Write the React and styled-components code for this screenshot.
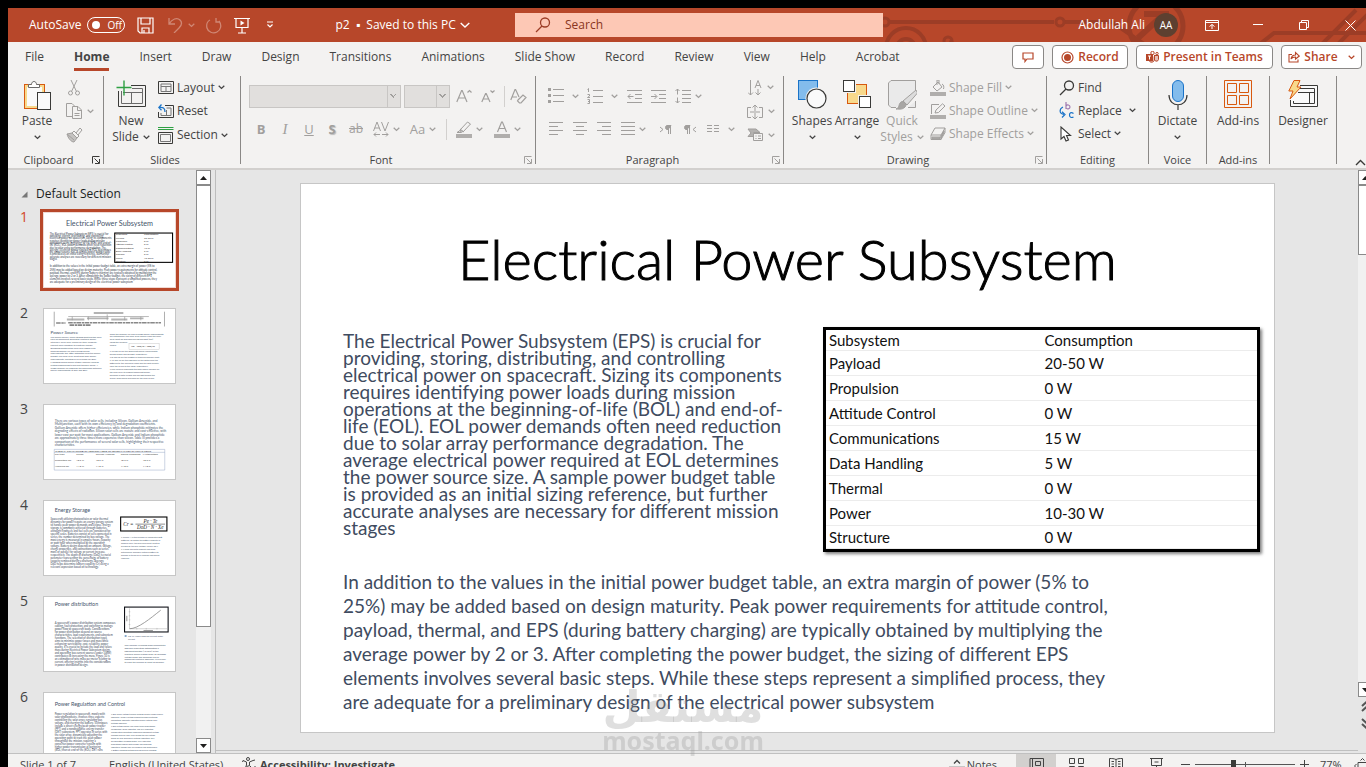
import {useState} from "react"
import styled, {createGlobalStyle} from "styled-components"

const tabs = ["File", "Home", "Insert", "Draw", "Design", "Transitions", "Animations", "Slide Show", "Record", "Review", "View", "Help", "Acrobat"]

const introLines = [
	"The Electrical Power Subsystem (EPS) is crucial for",
	"providing, storing, distributing, and controlling",
	"electrical power on spacecraft. Sizing its components",
	"requires identifying power loads during mission",
	"operations at the beginning-of-life (BOL) and end-of-",
	"life (EOL). EOL power demands often need reduction",
	"due to solar array performance degradation. The",
	"average electrical power required at EOL determines",
	"the power source size. A sample power budget table",
	"is provided as an initial sizing reference, but further",
	"accurate analyses are necessary for different mission",
	"stages",
]

const marginLines = [
	"In addition to the values in the initial power budget table, an extra margin of power (5% to",
	"25%) may be added based on design maturity. Peak power requirements for attitude control,",
	"payload, thermal, and EPS (during battery charging) are typically obtained by multiplying the",
	"average power by 2 or 3. After completing the power budget, the sizing of different EPS",
	"elements involves several basic steps. While these steps represent a simplified process, they",
	"are adequate for a preliminary design of the electrical power subsystem",
]

const budget = [
	["Payload", "20-50 W"],
	["Propulsion", "0 W"],
	["Attitude Control", "0 W"],
	["Communications", "15 W"],
	["Data Handling", "5 W"],
	["Thermal", "0 W"],
	["Power", "10-30 W"],
	["Structure", "0 W"],
]

/* ---------- icons ---------- */

const Icon = ({w = 16, h = 16, c = "currentColor", sw = 1, children}) => (
	<svg width={w} height={h} viewBox={`0 0 ${w} ${h}`} fill="none" stroke={c} strokeWidth={sw} aria-hidden="true">
		{children}
	</svg>
)

const Chevron = ({c}) => (
	<Icon w={7} h={5} c={c} sw={1.3}>
		<path d="M.7 .8 3.5 3.4 6.3 .8" />
	</Icon>
)

const SaveIcon = () => (
	<Icon w={17} h={17} sw={1.2}>
		<path d="M1 1H16V16H3L1 14ZM4 1V7H13V1M5 16V11H12V16M7 16V13" />
	</Icon>
)
const UndoIcon = () => (
	<Icon w={15} h={16} sw={1.3}>
		<path d="M1 1V7H7M1 7C4 2 9 0 12 3C15 6 13 9 11 11L6 16" />
	</Icon>
)
const RedoIcon = () => (
	<Icon w={17} h={17} sw={1.3}>
		<path d="M11 1V5H15M14 4C17 8 16 13 12 15C8 17 3 15 2 11C1 7 3 4 5 3" />
	</Icon>
)
const PresentIcon = () => (
	<Icon w={16} h={17} sw={1.2}>
		<path d="M0 1.5H16M2 1.5V10.5H14V1.5M8 10.5V16M4 16H12" />
		<path d="M6.5 3.5V8.5L10.5 6Z" fill="currentColor" stroke="none" />
	</Icon>
)
const CustomizeIcon = () => (
	<Icon w={8} h={8} sw={1.2}>
		<path d="M1 1H7M1.5 3.5 4 6 6.5 3.5" />
	</Icon>
)
const SearchIcon = ({w = 16, c}) => (
	<Icon w={w} h={16} c={c} sw={1.3}>
		<circle cx="10" cy="5.5" r="4.5" />
		<path d="M7 9 1 15" />
	</Icon>
)
const RibbonOptIcon = () => (
	<Icon w={14} h={11}>
		<path d="M.5 .5H13.5V10.5H.5ZM.5 2.5H13.5M7 9V4.5M4.5 6.5 7 4.5 9.5 6.5" />
	</Icon>
)
const MinimizeIcon = () => (
	<Icon w={10} h={10}>
		<path d="M0 4.5H10" />
	</Icon>
)
const RestoreIcon = () => (
	<Icon w={10} h={10}>
		<path d="M.5 2.5H7.5V9.5H.5ZM2.5 2.5V.5H9.5V7.5H7.5" />
	</Icon>
)
const CloseIcon = () => (
	<Icon w={11} h={11}>
		<path d="M.5 .5 10.5 10.5M10.5 .5 .5 10.5" />
	</Icon>
)
const CommentIcon = () => (
	<Icon w={12} h={11} sw={1.2}>
		<path d="M1 1H11V7H5L3 9.5V7H1Z" />
	</Icon>
)
const RecordIcon = () => (
	<Icon w={13} h={13} sw={1.2}>
		<circle cx="6.5" cy="6.5" r="5.5" />
		<circle cx="6.5" cy="6.5" r="3.5" fill="currentColor" stroke="none" />
	</Icon>
)
const TeamsIcon = () => (
	<Icon w={13} h={12}>
		<circle cx="6.5" cy="2" r="1.7" />
		<circle cx="11" cy="2.6" r="1.2" />
		<path d="M8 4.5H12.5V8.5C12 10.5 10 10.5 9 9.5M8.5 4.5V9C8 11.5 4 12 3 9.5" fill="currentColor" fillOpacity=".35" />
		<rect x="0" y="3" width="7" height="7" fill="currentColor" stroke="none" />
		<path d="M2 5H5M3.5 5V8.5" stroke="#fff" />
	</Icon>
)
const ShareIcon = () => (
	<Icon w={12} h={12} sw={1.1}>
		<path d="M4 3.5H1V11H10V8.5M3 8C3.5 5 5.5 4 7.5 4V1.5L11.3 5 7.5 8V6C5.5 6 4 6.5 3 8Z" />
	</Icon>
)
const PasteIcon = () => (
	<Icon w={28} h={31}>
		<rect x="1.5" y="4.5" width="20" height="24" fill="#f8d98c" stroke="#d8590f" />
		<rect x="4" y="7" width="15" height="19" fill="#fafafa" stroke="none" />
		<path d="M5.5 7.5V4.5H8.5C8.5 .5 13.5 .5 13.5 4.5H16.5V7.5Z" fill="#fff" stroke="#6a6a6a" />
		<rect x="14.5" y="12.5" width="13" height="17" fill="#fafafa" stroke="#3a3a38" />
	</Icon>
)
const CutIcon = () => (
	<Icon w={16} h={16}>
		<path d="M5 0 10.5 11.5M11 0 5.5 11.5" />
		<circle cx="4.5" cy="13" r="2" />
		<circle cx="11.5" cy="13" r="2" />
	</Icon>
)
const CopyIcon = () => (
	<Icon w={17} h={17}>
		<path d="M6.5 13.5H.5V.5H6L8.5 3M6.5 3.5H12L15.5 7V15.5H6.5ZM11.5 3.5V7.5H15.5M8.5 10.5H13.5M8.5 12.5H13.5" />
	</Icon>
)
const PainterIcon = () => (
	<Icon w={17} h={16}>
		<path d="M1 7 6 6 11 11 8 15C5 15 2 11 1 7Z" fill="#c4c2c0" />
		<path d="M6 6 8 4 13 9 11 11M10 6 14 1 16 3 12 8M1 7 8 13" />
	</Icon>
)
const NewSlideIcon = () => (
	<Icon w={31} h={28}>
		<path d="M15 5.5H29.5V26.5H2.5V11" stroke="#3a3a38" />
		<path d="M5.5 11V23.5H26.5V8.5H16M7 12.5H26.5M15.5 12.5V23.5" stroke="#6a6a6a" />
		<path d="M8 .5V15.5M.5 7.5H15.5" stroke="#2ea043" strokeWidth="1.4" />
	</Icon>
)
const LayoutIcon = () => (
	<Icon w={16} h={14} c="#3a3a38">
		<path d="M.5 .5H15.5V12.5H.5Z" />
		<path d="M3 3H13V10.5H3ZM3 5.5H13M8 5.5V10.5" stroke="#777" />
	</Icon>
)
const ResetIcon = () => (
	<Icon w={16} h={14} c="#3a3a38">
		<path d="M7 1.5H15.5V13.5H.5V8" />
		<path d="M8.5 4H13V11.5H3V9M8.5 6V11.5" stroke="#777" />
		<path d="M3.5 .5 .8 3.5 3.5 6.2M1 3.5C5 3 7 4 7 8" stroke="#1a73c8" strokeWidth="1.3" />
	</Icon>
)
const SectionIcon = () => (
	<Icon w={16} h={17} c="#3a3a38">
		<path d="M0 .5H15.5M0 2.5H15.5" stroke="#2ea043" />
		<path d="M.5 5.5H14.5V16.5H.5Z" />
		<path d="M2.5 7.5H12.5V14.5H2.5Z" stroke="#777" />
	</Icon>
)
const GrowFontIcon = () => (
	<Icon w={16} h={16} sw={1.2}>
		<path d="M.8 14 5.6 2.5H6.2L11 14M2.6 10H9.2M11.5 4.5 13.5 2.5 15.5 4.5" />
	</Icon>
)
const ShrinkFontIcon = () => (
	<Icon w={14} h={14} sw={1.2}>
		<path d="M.8 13 4.6 4.5H5.2L9 13M2.4 10H7.5M9.5 1.5 11.5 3.5 13.5 1.5" />
	</Icon>
)
const ClearFormatIcon = () => (
	<Icon w={17} h={16} sw={1.2}>
		<path d="M.8 12 5 1.5H5.6L9 9M2.6 9H7" />
		<path d="M8 12 13 7 16 9.5 11 15H9.5L7.5 13Z" />
	</Icon>
)
const SpacingIcon = () => (
	<Icon w={16} h={16}>
		<path d="M.5 10 4 1 7.5 10M1.7 7H6.3M8.5 1 12 10 15.5 1M3 11.5 1 13.5 3 15.5M1 13.5H7M13 11.5 15 13.5 13 15.5M15 13.5H9" />
	</Icon>
)
const HighlightIcon = () => (
	<Icon w={16} h={17}>
		<path d="M4 9 11.5 1 14.5 3 7 11ZM4 8 8 11M1 11.5 4 9.5 5.5 11.5Z" />
		<rect x="0" y="13" width="16" height="4" fill="#b0aeac" stroke="none" />
	</Icon>
)
const FontColorIcon = () => (
	<Icon w={16} h={17} sw={1.2}>
		<path d="M3.5 11 7.6 1H8.4L12.5 11M5 7.5H11" />
		<rect x="0" y="13" width="16" height="4" fill="#b0aeac" stroke="none" />
	</Icon>
)
const BulletsIcon = () => (
	<Icon w={16} h={16}>
		<path d="M5 1.5H16M5 7.5H16M5 13.5H16" />
		<path d="M0 1.5H3M0 7.5H3M0 13.5H3" strokeWidth="3" />
	</Icon>
)
const NumbersIcon = () => (
	<Icon w={16} h={17}>
		<path d="M6 2.5H16M6 8.5H16M6 14.5H16M.5 1.5 1.5 .5V4M.5 6.5H2.5V8L.5 9.5H3M.5 11.5H2.5V15.5H.5M1 13.5H2.5" />
	</Icon>
)
const OutdentIcon = () => (
	<Icon w={15} h={15}>
		<path d="M0 1.5H15M8 5.5H15M8 9.5H15M0 13.5H15M6.5 7.5H1M3.5 5 1 7.5 3.5 10" />
	</Icon>
)
const IndentIcon = () => (
	<Icon w={15} h={15}>
		<path d="M0 1.5H15M8 5.5H15M8 9.5H15M0 13.5H15M0 7.5H5.5M3.5 5 6 7.5 3.5 10" />
	</Icon>
)
const LineSpacingIcon = () => (
	<Icon w={16} h={16}>
		<path d="M7 2.5H16M7 6.5H16M7 10.5H16M7 14.5H16M2.5 1V6.5M.5 3 2.5 1 4.5 3M2.5 9.5V15M.5 13 2.5 15 4.5 13" />
	</Icon>
)
const aligns = {
	left: "M0 .5H14M0 4.5H9M0 8.5H14M0 12.5H9",
	center: "M0 .5H14M3 4.5H11M0 8.5H14M3 12.5H11",
	right: "M0 .5H14M5 4.5H14M0 8.5H14M5 12.5H14",
	justify: "M0 .5H14M0 4.5H14M0 8.5H14M0 12.5H14",
}
const AlignIcon = ({kind}) => (
	<Icon w={14} h={14}>
		<path d={aligns[kind]} />
	</Icon>
)
const PilcrowIcon = ({flip}) => (
	<Icon w={13} h={9}>
		{flip ? (
			<>
				<path d="M6 .5H2C0 .5 0 4.5 2 4.5H3Z" fill="currentColor" />
				<path d="M3.5 .5V9M5.5 .5V9M12 2 9 4.5 12 7" />
			</>
		) : (
			<>
				<path d="M12 .5H8C6 .5 6 4.5 8 4.5H9Z" fill="currentColor" />
				<path d="M9.5 .5V9M11.5 .5V9M1 2 4 4.5 1 7" />
			</>
		)}
	</Icon>
)
const ColumnsIcon = () => (
	<Icon w={13} h={8}>
		<path d="M0 .5H5M0 3.5H5M0 6.5H5M7 .5H12M7 3.5H12M7 6.5H12" />
	</Icon>
)
const TextDirIcon = () => (
	<Icon w={15} h={16}>
		<path d="M2.5 0V15M0 12.5 2.5 15 5 12.5M7 8 10 .5 13 8M8 5.5H12M10 9V15M7.5 12.5 10 15 12.5 12.5" />
	</Icon>
)
const AlignTextIcon = () => (
	<Icon w={17} h={16}>
		<path d="M4 3.5H.5V13.5H4M12 3.5H15.5V13.5H12M8 7V1M5.5 3.5 8 1 10.5 3.5M8 9V15M5.5 12.5 8 15 10.5 12.5M3 8H13" />
	</Icon>
)
const SmartArtIcon = () => (
	<Icon w={17} h={14}>
		<path d="M1 1H9L13 4.5H6.5V8.5H1L4 5Z" fill="#b4b2b0" />
		<path d="M6.5 5.5H15.5V12.5H6.5ZM8.5 8H9.5M11 8H14M8.5 10.5H9.5M11 10.5H14" fill="#f3f2f1" />
	</Icon>
)
const ShapesIcon = () => (
	<Icon w={29} h={29}>
		<rect x=".5" y=".5" width="19" height="19" fill="#83bcec" stroke="#1a73c8" />
		<circle cx="18.5" cy="18.5" r="11" fill="#f3f2f1" stroke="none" />
		<circle cx="18.5" cy="18.5" r="9.5" fill="#fafafa" stroke="#3a3a38" strokeWidth="1.2" />
	</Icon>
)
const ArrangeIcon = () => (
	<Icon w={29} h={29}>
		<rect x="4.5" y="4.5" width="19" height="19" fill="#f8d98c" stroke="#d8590f" />
		<rect x="-1" y="-1" width="14" height="14" fill="#f3f2f1" stroke="none" />
		<rect x=".5" y=".5" width="11" height="11" fill="#fff" stroke="#3a3a38" />
		<rect x="15" y="15" width="14" height="14" fill="#f3f2f1" stroke="none" />
		<rect x="16.5" y="16.5" width="11" height="11" fill="#fff" stroke="#3a3a38" />
	</Icon>
)
const QuickStylesIcon = () => (
	<Icon w={29} h={30}>
		<path d="M8 27.5H3L.5 25V3L3 .5H27.5V10M27.5 21V27.5H20" fill="#eaeaea" stroke="#a19f9d" />
		<path d="M15 21 28 10 29.5 13 19 25Z" fill="#dcdcdc" stroke="#a19f9d" />
		<path d="M8 29C12 28 10 23 14 21.5 18 22 19 25 17 27 14 30 11 29 8 29Z" fill="#a8a6a4" stroke="#a19f9d" />
	</Icon>
)
const FillIcon = () => (
	<Icon w={16} h={16}>
		<path d="M3 7 8 2 12 7 7 11ZM7 5V0H9V4M12 4C14 5 14 7 13.5 9" />
		<rect x="0" y="12" width="16" height="4" fill="#b0aeac" stroke="none" />
	</Icon>
)
const OutlineIcon = () => (
	<Icon w={16} h={16}>
		<path d="M9 1.5H1.5V11M5 10 6 7 12.5 .8 15 3 8.5 9.5Z" />
		<rect x="0" y="12" width="16" height="4" fill="#b0aeac" stroke="none" />
	</Icon>
)
const EffectsIcon = () => (
	<Icon w={16} h={14}>
		<path d="M1 8 5 1H15L11 8ZM1 8V12.5H11V8M11 12.5 15 5.5V1" />
		<path d="M2 10H10V12H2ZM11 9 14 4V6L11 11Z" fill="#b0aeac" />
	</Icon>
)
const ReplaceIcon = () => (
	<Icon w={16} h={17} sw={1.2}>
		<path d="M7 0V7M7 4C8 2 11 3 11 5 11 7 8 7.5 7 6" stroke="#a07ab0" />
		<path d="M4 5C0 7 0 12 5 12.5M3 9.8 6 12.5 3 15.5M14.5 11.5C12 9.5 10.5 11 10.5 13 10.5 15.5 12.5 16 14.5 15" stroke="#1a73c8" />
	</Icon>
)
const SelectIcon = () => (
	<Icon w={16} h={16} c="#3a3a38" sw={1.1}>
		<path d="M2 1V13L5 10.5 7 15 9.5 14 7.5 9.5H11.5Z" fill="#fff" />
	</Icon>
)
const MicIcon = () => (
	<Icon w={20} h={31}>
		<rect x="4.5" y=".5" width="11" height="21" rx="5.5" fill="#83bcec" stroke="#1a73c8" />
		<path d="M1 15C1 28 19 28 19 15M10 25V30" stroke="#3a3a38" strokeWidth="1.2" />
	</Icon>
)
const AddinsIcon = () => (
	<Icon w={28} h={28} c="#d8590f">
		<path d="M.5 .5H27.5V27.5H.5ZM3.5 3.5H12.5V12.5H3.5ZM15.5 3.5H24.5V12.5H15.5ZM3.5 15.5H12.5V24.5H3.5ZM15.5 15.5H24.5V24.5H15.5Z" />
	</Icon>
)
const DesignerIcon = () => (
	<Icon w={31} h={28}>
		<path d="M12 5.5H29.5V26.5H2.5V20" fill="#fafafa" stroke="#3a3a38" />
		<path d="M12 8.5H26.5V23.5H5.5V21M10 12.5H26.5M21.5 12.5V23.5" stroke="#3a3a38" />
		<path d="M6 .5H12L9 7H13L2 19 5 11H.8Z" fill="#f8d98c" stroke="#d8590f" />
	</Icon>
)
const LauncherIcon = ({c = "#605e5c"}) => (
	<Icon w={8} h={8} c={c}>
		<path d="M7.5 .5H.5V7.5M2.5 2.5 7 7M7.5 3V7.5H3" />
	</Icon>
)
const ArrowHead = ({down}) => (
	<Icon w={7} h={4}>
		<path d={down ? "M0 0H7L3.5 4Z" : "M0 4H7L3.5 0Z"} fill="#201f1e" stroke="none" />
	</Icon>
)
const AccessibilityIcon = () => (
	<Icon w={15} h={15}>
		<circle cx="6" cy="2" r="1.5" />
		<path d="M1 3.5 4.5 5V8L2.5 13M11 3.5 7.5 5V8M1 3.5 .5 5M11 3.5 13 3M4.5 9.5 8 8.5M8 9 13.5 14.5M13.5 9 8 14.5" />
	</Icon>
)

/* ---------- slide previews, drawn in the slide's own 974 x 550 space ---------- */

const Lines = ({x, y, step, size, fill = "#44546a", lines, family = "Lato, sans-serif"}) => (
	<g fontSize={size} fill={fill} fontFamily={family}>
		{lines.map((line, i) => (
			<text key={i} x={x} y={y + i * step}>
				{line}
			</text>
		))}
	</g>
)

const PreviewOne = () => (
	<>
		<text x="487" y="100" fontSize="54" textAnchor="middle" fill="#44546a">
			Electrical Power Subsystem
		</text>
		<Lines x={42} y={163} step={17} size={20} fill="#2c3748" lines={introLines} />
		<Lines x={42} y={404} step={24} size={20} fill="#2c3748" lines={marginLines} />
		<rect x="526" y="149" width="430" height="218" fill="#fff" stroke="#000" strokeWidth="8" />
		<Lines x={534} y={165} step={25} size={18} fill="#333" lines={["Subsystem", ...budget.map((b) => b[0])]} />
		<Lines x={744} y={165} step={25} size={18} fill="#333" lines={["Consumption", ...budget.map((b) => b[1])]} />
	</>
)

const PreviewTwo = () => (
	<>
		<path d="M76 20V130M896 20V130" stroke="#888" strokeWidth="5" />
		<path d="M370 30H590M170 78H300M320 70H480M500 78H620M640 70H740" stroke="#b4b4b4" strokeWidth="14" />
		<path d="M470 40V56M180 56H780M210 56V84M330 56V84M470 56V84M600 56V84M720 56V84" stroke="#999" strokeWidth="5" />
		<path d="M180 102H870M90 104H160M190 120H350" stroke="#888" strokeWidth="12" strokeDasharray="34 5 18 4" />
		<text x="49" y="186" fontSize="34" fill="#44546a">
			Power Source
		</text>
		<Lines
			x={49}
			y={212}
			step={21}
			size={17}
			lines={[
				"The power source, when utilizing photovoltaic solar",
				"cells on spacecraft, generates electrical power",
				"internally. Solar cells, known for their reliability,",
				"convert solar radiation to electrical energy.",
				"Designing photovoltaic solar cells begins with",
				"defining mission life and average power",
				"requirements, the latter estimated from the power",
				"budget. The solar array must meet EOL power",
				"requirements, resulting in an oversize for BOL.",
				"Managing excess power at BOL requires lowered",
				"system engineering to prevent thermal issues. A",
				"longer mission life amplifies the difference between",
				"power requirements at EOL and BOL.",
			]}
		/>
		<Lines
			x={488}
			y={190}
			step={21}
			size={17}
			lines={["Once the mission life and average power requirements", "are established, the solar array power from the solar", "array must be provided during daylight (Psa)", "using the formula:", "where:"]}
		/>
		<rect x="632" y="256" width="224" height="46" fill="#fff" stroke="#bbb" strokeWidth="3" />
		<text x="648" y="286" fontSize="17" fontStyle="italic" fill="#333">
			Psa = PeTe/Xe + PdTd/Xd
		</text>
		<Lines
			x={488}
			y={322}
			step={22}
			size={16}
			lines={[
				"•  Pe and Pd are the spacecraft power requirements",
				"    during eclipse and daylight, respectively.",
				"•  Te and Td are the lengths of these periods per orbit.",
				"•  Xe and Xd are the efficiency of the paths from the",
				"    batteries to the individual loads and the path directly",
				"    from the arrays to the loads, respectively.",
				"•  This formula represents the total power needed for",
				"    the solar array to support spacecraft power",
				"    demands in both eclipse and daylight phases the",
				"    overall need power provided by the solar arrays.",
			]}
		/>
	</>
)

const PreviewThree = () => (
	<>
		<Lines
			x={80}
			y={126}
			step={26}
			size={23}
			lines={[
				"There are various types of solar cells, including Silicon, Gallium Arsenide, and",
				"Multijunction, each with its own efficiency (η) and degradation coefficients.",
				"Gallium Arsenide offers higher efficiencies, while Indium phosphide mitigates the",
				"degrading effects of radiation. Silicon solar cells are mature and cost-effective, with",
				"lower cost per watt for most applications. Gallium Arsenide and Indium phosphide",
				"are approximately three times more expensive than silicon. Table III provides a",
				"comparison of the performance of several solar cells, highlighting their respective",
				"characteristics.",
			]}
		/>
		<path d="M76 330H898V484H76ZM76 352H898" stroke="#7f94b8" strokeWidth="3" fill="none" />
		<Lines x={84} y={349} step={40} size={19} fill="#333" lines={["TABLE III. COMPARISON OF PERFORMANCE OF SEVERAL TYPES OF SOLAR CELLS"]} />
		{["Cell type", "Silicon", "Gallium Arsenide", "Indium Phosphide", "Multijunction"].map((t, i) => (
			<Lines key={t} x={[80, 240, 385, 570, 735][i]} y={374} step={42} size={19} fill="#444" lines={[t, i ? "18.5 %" : "Theoretical eff.", i ? "14.8 %" : "Achieved eff."]} />
		))}
	</>
)

const PreviewFour = () => (
	<>
		<text x="80" y="83" fontSize="40" fill="#44546a">
			Energy Storage
		</text>
		<Lines
			x={49}
			y={145}
			step={22}
			size={20}
			fill="#3a4658"
			lines={[
				"Spacecraft utilizing photovoltaics or solar thermal",
				"dynamics for power require an energy storage system",
				"to handle peak-power demands and eclipse. Energy",
				"storage is commonly achieved through batteries,",
				"although flywheels and fuel cells are considered for",
				"specific cases. Batteries consist of cells connected in",
				"series, the number determined by bus voltage. The",
				"most energy is measured in ampere-hours, capacity",
				"or watt-hour when multiplied by the operating",
				"voltage. Battery design depends on amount, voltage,",
				"charge properties, and connections such as series",
				"more or parallel for voltage or current increase,",
				"respectively. The depth of discharge (DoD) is crucial",
				"parameter representing the percentage of battery",
				"capacity removed during a discharge. Average",
				"DoD helps determine battery capacity (Cr) using a",
				"relevant expression based on technology.",
			]}
		/>
		<rect x="570" y="119" width="344" height="104" fill="#fff" stroke="#000" strokeWidth="8" />
		<g fontFamily="Liberation Serif, serif" fontStyle="italic" fontSize="38" fill="#222">
			<text x="590" y="184">Cr =</text>
			<text x="740" y="162">Pe · Te</text>
			<text x="692" y="210">DoD · N · Xe</text>
		</g>
		<path d="M680 172H900" stroke="#333" strokeWidth="4" />
		<Lines
			x={573}
			y={275}
			step={22}
			size={16}
			lines={[
				"•  Where N is the number of connected batt.",
				"    batteries. To obtain the battery capacity in",
				"    ampere-hour, the previous result must be",
				"    divided by the bus voltage, usually 28 V.",
				"•  If more accurate capacity has been",
				"    determined, finding a suitable battery to",
				"    balance in terms of all mission and power",
				"    required.",
			]}
		/>
	</>
)

const PreviewFive = () => (
	<>
		<text x="80" y="66" fontSize="40" fill="#44546a">
			Power distribution
		</text>
		<Lines
			x={80}
			y={203}
			step={22}
			size={20}
			fill="#3a4658"
			lines={[
				"A spacecraft's power distribution system compasses",
				"cabling, fault protection, and switching to manage",
				"power flow to spacecraft loads. Considerations",
				"for power distribution depend on source",
				"characteristics, load requirements, and subsystem",
				"functions. The selection of distribution types",
				"aims to minimize power losses and mass while",
				"enhancing survivability, cost, reliability, power",
				"quality. It is crucial to include the load and failure",
				"mass during Electrical Power Subsystem design,",
				"and operating bus current sources (under 10kW)",
				"contributes to increasing the mass. Figure 10 is",
				"an estimation of wire mass per meter relating to",
				"current, offering insights into the considerations",
				"in power distribution design.",
			]}
		/>
		<rect x="599" y="75" width="324" height="185" fill="#fff" stroke="#0c0e14" strokeWidth="8" />
		<path d="M636 84V236H915M630 110H642M630 140H642M630 170H642M630 205H642M690 230V242M760 230V242M840 230V242" stroke="#999" strokeWidth="3" fill="none" />
		<path d="M636 236C700 236 790 160 868 98" stroke="#888" strokeWidth="6" fill="none" />
		<path d="M740 250H810M616 140V180" stroke="#777" strokeWidth="6" />
		<path d="M600 290H614" stroke="#1f5f9f" strokeWidth="8" />
		<Lines x={624} y={294} step={24} size={16} lines={["Fig. 11. Cable mass per current meter", "current."]} />
		<Lines
			x={598}
			y={362}
			step={22}
			size={17}
			lines={["This increase in cabling mass necessitates", "appraisal subsystem optimization a", "significant portion (10-25%) of the", "electrical power system mass. To minimize", "voltage drops and maximize overall", "spacecraft electrical efficiency, it is crucial", "to keep the harness as short as possible."]}
		/>
	</>
)

const PreviewSix = () => (
	<>
		<text x="80" y="95" fontSize="40" fill="#44546a">
			Power Regulation and Control
		</text>
		<Lines
			x={80}
			y={165}
			step={22}
			size={20}
			fill="#3a4658"
			lines={[
				"Power regulation in spacecraft, mostly with",
				"solar photovoltaics, involves three aspects:",
				"controlling the solar array, regulating bus",
				"voltage, and charging the battery. Techniques",
				"include a direct-energy/peak-power tracker",
				"(PPT) and a nondissipative energy transfer",
				"(DET) subsystem. PPT operates in series with",
				"the solar array, dynamically adjusting the",
				"operating point to track the peak-power",
				"throughout the mission, requiring a",
				"converter/power converter system with",
				"higher power transmission at beginning",
				"(BOL) than at end-of-life (EOL). DET runs",
			]}
		/>
		<Lines
			x={498}
			y={165}
			step={22}
			size={15}
			lines={[
				"•  Bus Power voltage transfer systems directly supply power",
				"    efficiently, using a voltage element through switching",
				"    connecting, efficiently regulation power outside such",
				"    systems efficiency.",
				"•  Bus voltage control falls under three subsystems:",
				"    unregulated, quasi-regulated, and fully regulated.",
				"    Unregulated subsystems experience significant voltage",
				"    changes and bus load. They charge the bus voltage",
				"    based on load and power systems regulation, only",
				"    during battery charging mode. Fully regulated",
				"    subsystems employ both charge and discharge",
				"    regulators, though they are complex and controllable.",
				"•  Battery charging systems provide parallel charging",
			]}
		/>
	</>
)

const previews = [PreviewOne, PreviewTwo, PreviewThree, PreviewFour, PreviewFive, PreviewSix]

/* ---------- app ---------- */

const TitleBar = () => (
	<TitleBarWrap>
		<Circuit viewBox="0 0 484 34" aria-hidden="true">
			<g fill="none" stroke="#9c3d26" strokeWidth="4">
				<circle cx="3" cy="14" r="4" strokeWidth="3" />
				<path d="M7 14H172M182 14H230L262 36" />
				<circle cx="178" cy="14" r="4" strokeWidth="3" />
				<circle cx="24" cy="40" r="20" />
				<circle cx="24" cy="40" r="9" />
				<path d="M67 34 72 36H160L172 40" />
				<circle cx="66" cy="33" r="4" strokeWidth="3" />
				<circle cx="274" cy="18" r="27" strokeWidth="5" />
				<path d="M256 30 282 6M262 6H284V26" strokeWidth="6" />
				<path d="M378 36 392 25H484M440 36 474 2M456 36 486 6" />
			</g>
		</Circuit>
		<TitleSide>
			<AutoSave>
				AutoSave
				<Toggle type="button" role="switch" aria-checked="false" aria-label="AutoSave">
					<i />
					Off
				</Toggle>
			</AutoSave>
			<BarButton $w={40} aria-label="Save">
				<SaveIcon />
			</BarButton>
			<BarButton $w={20} $dim aria-label="Undo">
				<UndoIcon />
			</BarButton>
			<BarButton $w={12} $dim aria-label="Undo history">
				<Chevron />
			</BarButton>
			<BarButton $w={32} $dim aria-label="Redo">
				<RedoIcon />
			</BarButton>
			<BarButton $w={26} aria-label="Start from beginning">
				<PresentIcon />
			</BarButton>
			<BarButton $w={30} aria-label="Customize toolbar">
				<CustomizeIcon />
			</BarButton>
			<DocName type="button">
				p2 &nbsp;▪&nbsp; Saved to this PC
				<Icon w={10} h={7} sw={1.4}>
					<path d="M.7 1 5 5 9.3 1" />
				</Icon>
			</DocName>
		</TitleSide>
		<SearchBox>
			<SearchIcon />
			<input type="search" placeholder="Search" aria-label="Search" />
		</SearchBox>
		<TitleSide $end>
			<Account type="button">
				Abdullah Ali
				<span>AA</span>
			</Account>
			<BarButton $w={46} aria-label="Ribbon display options">
				<RibbonOptIcon />
			</BarButton>
			<BarButton $w={46} aria-label="Minimize">
				<MinimizeIcon />
			</BarButton>
			<BarButton $w={46} aria-label="Restore">
				<RestoreIcon />
			</BarButton>
			<BarButton $w={46} aria-label="Close">
				<CloseIcon />
			</BarButton>
		</TitleSide>
	</TitleBarWrap>
)

const TabBar = ({active, onSelect}) => (
	<TabBarWrap>
		<TabList role="tablist">
			{tabs.map((t) => (
				<Tab key={t} type="button" role="tab" aria-selected={t === active} $active={t === active} onClick={() => onSelect(t)}>
					{t}
				</Tab>
			))}
		</TabList>
		<PillRow>
			<Pill type="button" $w={32} aria-label="Comments">
				<CommentIcon />
			</Pill>
			<Pill type="button" $w={76}>
				<RecordIcon />
				Record
			</Pill>
			<Pill type="button" $w={137}>
				<TeamsIcon />
				Present in Teams
			</Pill>
			<Pill type="button" $w={81}>
				<ShareIcon />
				Share
				<PillCaret>
					<Chevron />
				</PillCaret>
			</Pill>
		</PillRow>
	</TabBarWrap>
)

const Big = ({icon, label, second, caret, dim, w}) => (
	<BigButton type="button" $w={w} $dim={dim}>
		<BigIcon>{icon}</BigIcon>
		<span>{label}</span>
		<BigCaret>
			{second}
			{caret && <Chevron />}
		</BigCaret>
	</BigButton>
)

const Small = ({icon, label, caret, dim, far}) => (
	<SmallButton type="button" $dim={dim}>
		{icon}
		<SmallLabel $far={far}>{label}</SmallLabel>
		{caret && <Chevron />}
	</SmallButton>
)

const Group = ({w, label, launcher, children}) => (
	<GroupWrap $w={w}>
		<GroupBody>{children}</GroupBody>
		<GroupLabel>
			{label}
			{launcher && (
				<Launcher type="button" aria-label={`${label} settings`}>
					<LauncherIcon c={launcher} />
				</Launcher>
			)}
		</GroupLabel>
	</GroupWrap>
)

const Ribbon = () => (
	<RibbonWrap>
		<Group w={96} label="Clipboard" launcher="#3a3a38">
			<Big w={58} icon={<PasteIcon />} label="Paste" caret />
			<Stack>
				<Tool $w={16} aria-label="Cut">
					<CutIcon />
				</Tool>
				<Tool $w={24} aria-label="Copy">
					<CopyIcon />
					<Chevron />
				</Tool>
				<Tool $w={16} aria-label="Format Painter">
					<PainterIcon />
				</Tool>
			</Stack>
		</Group>
		<Group w={137} label="Slides">
			<Big w={54} icon={<NewSlideIcon />} label="New" second="Slide" caret />
			<Stack>
				<Small icon={<LayoutIcon />} label="Layout" caret />
				<Small icon={<ResetIcon />} label="Reset" />
				<Small icon={<SectionIcon />} label="Section" caret />
			</Stack>
		</Group>
		<Group w={295} label="Font" launcher="#a19f9d">
			<Rows>
				<ToolRow>
					<Combo $w={152} aria-label="Font" disabled />
					<Combo $w={46} aria-label="Font size" disabled />
					<Tool $w={22} aria-label="Increase font size">
						<GrowFontIcon />
					</Tool>
					<Tool $w={26} aria-label="Decrease font size">
						<ShrinkFontIcon />
					</Tool>
					<Divider />
					<Tool $w={20} aria-label="Clear formatting">
						<ClearFormatIcon />
					</Tool>
				</ToolRow>
				<ToolRow>
					<Tool $w={24} aria-label="Bold">
						<b>B</b>
					</Tool>
					<Tool $w={24} aria-label="Italic">
						<em>I</em>
					</Tool>
					<Tool $w={24} aria-label="Underline">
						<u>U</u>
					</Tool>
					<Tool $w={22} aria-label="Shadow">
						<ShadowLetter>S</ShadowLetter>
					</Tool>
					<Tool $w={26} aria-label="Strikethrough">
						<s>ab</s>
					</Tool>
					<Tool $w={34} aria-label="Character spacing">
						<SpacingIcon />
						<Chevron />
					</Tool>
					<Tool $w={40} aria-label="Change case">
						Aa
						<Chevron />
					</Tool>
					<Divider />
					<Tool $w={38} aria-label="Highlight colour">
						<HighlightIcon />
						<Chevron />
					</Tool>
					<Tool $w={38} aria-label="Font colour">
						<FontColorIcon />
						<Chevron />
					</Tool>
				</ToolRow>
			</Rows>
		</Group>
		<Group w={248} label="Paragraph" launcher="#a19f9d">
			<Rows>
				<ToolRow>
					<Tool $w={38} $gap={8} aria-label="Bullets">
						<BulletsIcon />
						<Chevron />
					</Tool>
					<Tool $w={40} $gap={8} aria-label="Numbering">
						<NumbersIcon />
						<Chevron />
					</Tool>
					<Tool $w={24} aria-label="Decrease indent">
						<OutdentIcon />
					</Tool>
					<Tool $w={24} aria-label="Increase indent">
						<IndentIcon />
					</Tool>
					<Tool $w={36} aria-label="Line spacing">
						<LineSpacingIcon />
						<Chevron />
					</Tool>
				</ToolRow>
				<ToolRow>
					<Tool $w={24} aria-label="Align left">
						<AlignIcon kind="left" />
					</Tool>
					<Tool $w={24} aria-label="Center">
						<AlignIcon kind="center" />
					</Tool>
					<Tool $w={24} aria-label="Align right">
						<AlignIcon kind="right" />
					</Tool>
					<Tool $w={34} aria-label="Justify">
						<AlignIcon kind="justify" />
						<Chevron />
					</Tool>
					<Tool $w={30} aria-label="Left to right">
						<PilcrowIcon />
					</Tool>
					<Tool $w={20} aria-label="Right to left">
						<PilcrowIcon flip />
					</Tool>
					<Tool $w={42} $gap={8} aria-label="Columns">
						<ColumnsIcon />
						<Chevron />
					</Tool>
				</ToolRow>
			</Rows>
			<Stack $left={3}>
				<Tool $w={32} aria-label="Text direction">
					<TextDirIcon />
					<Chevron />
				</Tool>
				<Tool $w={32} aria-label="Align text">
					<AlignTextIcon />
					<Chevron />
				</Tool>
				<Tool $w={32} aria-label="Convert to SmartArt">
					<SmartArtIcon />
					<Chevron />
				</Tool>
			</Stack>
		</Group>
		<Group w={263} label="Drawing" launcher="#a19f9d">
			<Big w={56} icon={<ShapesIcon />} label="Shapes" caret />
			<Big w={34} icon={<ArrangeIcon />} label="Arrange" caret />
			<Big w={56} icon={<QuickStylesIcon />} label="Quick" second="Styles" caret dim />
			<Stack $tight>
				<Small icon={<FillIcon />} label="Shape Fill" caret dim />
				<Small icon={<OutlineIcon />} label="Shape Outline" caret dim />
				<Small icon={<EffectsIcon />} label="Shape Effects" caret dim />
			</Stack>
		</Group>
		<Group w={102} label="Editing">
			<Stack $tight $left={12}>
				<Small icon={<SearchIcon c="#3a3a38" />} label="Find" />
				<Small icon={<ReplaceIcon />} label="Replace" caret far />
				<Small icon={<SelectIcon />} label="Select" caret />
			</Stack>
		</Group>
		<Group w={58} label="Voice">
			<Big w={57} icon={<MicIcon />} label="Dictate" caret />
		</Group>
		<Group w={63} label="Add-ins">
			<Big w={62} icon={<AddinsIcon />} label="Add-ins" />
		</Group>
		<Group w={67} label="">
			<Big w={66} icon={<DesignerIcon />} label="Designer" />
		</Group>
		<Collapse type="button" aria-label="Collapse the ribbon">
			<Icon w={11} h={7} sw={1.4} c="#3a3a38">
				<path d="M1 6 5.5 1.5 10 6" />
			</Icon>
		</Collapse>
	</RibbonWrap>
)

const Scrollbar = ({thumb}) => (
	<ScrollTrack>
		<ScrollButton type="button" tabIndex={-1} aria-label="Scroll up">
			<ArrowHead />
		</ScrollButton>
		<ScrollThumb style={{flexBasis: thumb}} />
		<ScrollSpace />
		<ScrollButton type="button" tabIndex={-1} aria-label="Scroll down">
			<ArrowHead down />
		</ScrollButton>
	</ScrollTrack>
)

const SlidePanel = ({current, onPick}) => (
	<Panel>
		<PanelList>
			<SectionHead type="button">
				<Icon w={7} h={7}>
					<path d="M6.5 .5V6.5H.5Z" fill="#777" stroke="none" />
				</Icon>
				Default Section
			</SectionHead>
			{previews.map((Preview, i) => (
				<ThumbRow key={i}>
					<ThumbNo $active={i === current}>{i + 1}</ThumbNo>
					<Thumb type="button" $active={i === current} aria-label={`Slide ${i + 1}`} onClick={() => onPick(i)}>
						<svg viewBox="0 0 974 550" fontFamily="Lato, sans-serif">
							<Preview />
						</svg>
					</Thumb>
				</ThumbRow>
			))}
		</PanelList>
		<Scrollbar thumb="442px" />
	</Panel>
)

const breakLines = (lines) =>
	lines.map((line) => (
		<span key={line}>
			{line}
			<br />
		</span>
	))

const Slide = () => (
	<SlideWrap>
		<h1>Electrical Power Subsystem</h1>
		<SlideColumns>
			<Intro>{breakLines(introLines)}</Intro>
			<BudgetTable>
				<thead>
					<tr>
						<th scope="col">Subsystem</th>
						<th scope="col">Consumption</th>
					</tr>
				</thead>
				<tbody>
					{budget.map(([name, watts]) => (
						<tr key={name}>
							<td>{name}</td>
							<td>{watts}</td>
						</tr>
					))}
				</tbody>
			</BudgetTable>
		</SlideColumns>
		<Margin>{breakLines(marginLines)}</Margin>
	</SlideWrap>
)

const StatusBar = () => (
	<StatusWrap>
		<StatusText $w={89}>Slide 1 of 7</StatusText>
		<StatusText $w={133}>English (United States)</StatusText>
		<StatusButton type="button">
			<AccessibilityIcon />
			<b>Accessibility: Investigate</b>
		</StatusButton>
		<StatusEnd>
			<NotesButton type="button">
				<Icon w={16} h={12} c="#444">
					<path d="M0 8.5H16M5 4.5 8 1.5 11 4.5" strokeWidth="1.3" />
				</Icon>
				Notes
			</NotesButton>
			<ViewButton type="button" $active aria-label="Normal view">
				<Icon w={15} h={12} c="#444">
					<path d="M1 .5H14.5V12M1 .5V12M3.5 .5V12M3.5 10.5H14M6.5 3.5H11.5V7.5H6.5Z" />
				</Icon>
			</ViewButton>
			<ViewButton type="button" aria-label="Slide sorter">
				<Icon w={15} h={12} c="#444">
					<path d="M.5 .5H5.5V5.5H.5ZM9.5 .5H14.5V5.5H9.5ZM.5 8.5H5.5V12M.5 8.5V12M9.5 12V8.5H14.5V12" />
				</Icon>
			</ViewButton>
			<ViewButton type="button" aria-label="Reading view">
				<Icon w={14} h={12} c="#444">
					<path d="M7 12V1.5C5 .5 3 .5 .5 .5V11H5L7 12M7 1.5C9 .5 11 .5 13.5 .5V11H9L7 12M2.5 3.5H5M2.5 6H5M2.5 8.5H5M9 3.5H11.5M9 6H11.5M9 8.5H11.5" />
				</Icon>
			</ViewButton>
			<ViewButton type="button" aria-label="Slide show">
				<Icon w={13} h={12} c="#444">
					<path d="M0 .5H13M1.5 .5V7.5H11.5V.5M6.5 7.5V11.5M4 11.5H9M4.5 4H8.5" />
				</Icon>
			</ViewButton>
			<ZoomSign type="button" aria-label="Zoom out">
				<Icon w={9} h={9} c="#444">
					<path d="M0 4.5H9" />
				</Icon>
			</ZoomSign>
			<ZoomRange type="range" min="10" max="400" defaultValue="158" aria-label="Zoom" />
			<ZoomSign type="button" aria-label="Zoom in">
				<Icon w={9} h={9} c="#444">
					<path d="M0 4.5H9M4.5 0V9" />
				</Icon>
			</ZoomSign>
			<ZoomValue>77%</ZoomValue>
			<Icon w={16} h={14} c="#444">
				<path d="M4 4.5H13V12H4ZM6.5 2.5 8.5 .5 10.5 2.5M2.5 6 .5 8 2.5 10" />
			</Icon>
		</StatusEnd>
	</StatusWrap>
)

const App = () => {
	const [tab, setTab] = useState("Home")
	const [current, setCurrent] = useState(0)

	return (
		<>
			<GlobalStyle />
			<Window>
				<TitleBar />
				<TabBar active={tab} onSelect={setTab} />
				<Ribbon />
				<Workspace>
					<SlidePanel current={current} onPick={setCurrent} />
					<Stage>
						<Slide />
					</Stage>
					<StageScroll>
						<Scrollbar thumb="70px" />
						<PageJump>
							<Icon w={13} h={11} c="#555" sw={2}>
								<path d="M2 5 6.5 1 11 5M2 10 6.5 6 11 10" />
							</Icon>
							<Icon w={13} h={11} c="#555" sw={2}>
								<path d="M2 1 6.5 5 11 1M2 6 6.5 10 11 6" />
							</Icon>
						</PageJump>
					</StageScroll>
				</Workspace>
				<StatusBar />
			</Window>
			<Watermark>
				<span lang="ar">مستقل</span>
				mostaql.com
			</Watermark>
		</>
	)
}

export default App

/* ---------- styles ---------- */

const GlobalStyle = createGlobalStyle`
	* {
		box-sizing: border-box;
	}
	body {
		margin: 0;
		overflow: hidden;
		background: #000;
		color: #444;
		font: 12px/16px "Open Sans", "Noto Sans", sans-serif;
	}
	button, input, select {
		margin: 0;
		padding: 0;
		border: 0;
		background: none;
		color: inherit;
		font: inherit;
	}
	svg {
		flex: none;
		display: block;
	}
`

const Window = styled.div`
	display: flex;
	flex-direction: column;
	height: calc(100vh + 8px);
	padding: 8px 0 0 8px;
	overflow: hidden;
`

const TitleBarWrap = styled.header`
	position: relative;
	display: flex;
	align-items: center;
	flex: 0 0 34px;
	background: #b7472a;
	color: #fff;
`

const Circuit = styled.svg`
	position: absolute;
	top: 0;
	right: 0;
	width: 484px;
	height: 34px;
`

const TitleSide = styled.div`
	position: relative;
	display: flex;
	align-items: center;
	flex: ${({$end}) => ($end ? "1 1 0" : "0 0 507px")};
	justify-content: ${({$end}) => ($end ? "flex-end" : "flex-start")};
	padding-left: ${({$end}) => ($end ? 0 : 21)}px;
	margin-right: ${({$end}) => ($end ? -7 : 0)}px;
`

const AutoSave = styled.label`
	display: flex;
	align-items: center;
	gap: 6px;
`

const Toggle = styled.button`
	display: flex;
	align-items: center;
	gap: 7px;
	width: 38px;
	height: 16px;
	padding-left: 4px;
	border: 1px solid #fff;
	border-radius: 8px;
	font-size: 10px;
	line-height: 14px;

	i {
		width: 8px;
		height: 8px;
		border-radius: 50%;
		background: #fff;
	}
`

const BarButton = styled.button.attrs({type: "button"})`
	display: flex;
	align-items: center;
	justify-content: center;
	width: ${({$w}) => $w}px;
	height: 34px;
	opacity: ${({$dim}) => ($dim ? 0.35 : 1)};
`

const DocName = styled.button`
	display: flex;
	align-items: center;
	gap: 4px;
	margin-left: 50px;
	white-space: nowrap;
`

const SearchBox = styled.label`
	position: relative;
	display: flex;
	align-items: center;
	gap: 14px;
	flex: 0 1 368px;
	height: 24px;
	padding-left: 20px;
	background: #fdc8b5;
	color: #9c3d26;

	input {
		flex: 1;
		outline: none;
	}
	input::placeholder {
		color: #8a3621;
		opacity: 1;
	}
`

const Account = styled.button`
	display: flex;
	align-items: center;
	gap: 9px;
	margin-right: 11px;

	span {
		width: 24px;
		height: 24px;
		border-radius: 50%;
		background: #5d4030;
		font-size: 10px;
		line-height: 24px;
	}
`

const TabBarWrap = styled.nav`
	display: flex;
	align-items: center;
	justify-content: space-between;
	flex: 0 0 31px;
	padding: 0 4px 0 17px;
	background: #f3f2f1;
`

const TabList = styled.div`
	display: flex;
	gap: 30px;
`

const Tab = styled.button`
	height: 26px;
	padding-top: 2px;
	border-bottom: 3px solid ${({$active}) => ($active ? "#b7472a" : "transparent")};
	font-size: 12px;
	font-weight: ${({$active}) => ($active ? 700 : 400)};
	white-space: nowrap;
`

const PillRow = styled.div`
	display: flex;
	gap: 8px;
	padding-bottom: 1px;
`

const Pill = styled.button`
	display: flex;
	align-items: center;
	justify-content: center;
	gap: 4px;
	width: ${({$w}) => $w}px;
	height: 24px;
	border: 1px solid #8a8886;
	border-radius: 4px;
	background: #fff;
	color: #b7472a;
	font-weight: 600;
	white-space: nowrap;
`

const PillCaret = styled.span`
	margin-left: 6px;
`

const RibbonWrap = styled.section`
	display: flex;
	flex: 0 0 97px;
	padding-top: 3px;
	border-bottom: 2px solid #d2d0ce;
	background: #f3f2f1;
`

const GroupWrap = styled.div`
	display: flex;
	flex-direction: column;
	flex: 0 0 ${({$w}) => $w}px;
	min-width: 0;
	height: 88px;
	border-right: 1px solid #8a8886;
`

const GroupBody = styled.div`
	display: flex;
	flex: 0 0 76px;
`

const GroupLabel = styled.div`
	position: relative;
	height: 16px;
	padding-right: 14px;
	font-size: 11px;
	text-align: center;

	${GroupWrap}:nth-child(n + 6) & {
		padding-right: 0;
	}
`

const Launcher = styled.button`
	position: absolute;
	right: 3px;
	top: 4px;
`

const BigButton = styled.button`
	display: flex;
	flex-direction: column;
	align-items: center;
	width: ${({$w}) => $w}px;
	color: ${({$dim}) => ($dim ? "#a19f9d" : "inherit")};
	white-space: nowrap;
`

const BigIcon = styled.span`
	display: flex;
	justify-content: center;
	height: 37px;
	padding-top: 4px;
`

const BigCaret = styled.span`
	display: flex;
	align-items: center;
	gap: 4px;
	height: 16px;
`

const Stack = styled.div`
	display: flex;
	flex-direction: column;
	align-items: flex-start;
	justify-content: space-around;
	height: ${({$tight}) => ($tight ? 69 : 71)}px;
	padding-left: ${({$left}) => $left || 0}px;
`

const SmallButton = styled.button`
	display: flex;
	align-items: center;
	gap: 3px;
	height: 20px;
	color: ${({$dim}) => ($dim ? "#a19f9d" : "inherit")};
	white-space: nowrap;
`

const SmallLabel = styled.span`
	margin-right: ${({$far}) => ($far ? 4 : 0)}px;
`

const Rows = styled.div`
	display: flex;
	flex-direction: column;
	gap: 9px;
	padding: 8px 0 0 8px;
`

const ToolRow = styled.div`
	display: flex;
	align-items: center;
	height: 24px;
`

const Tool = styled.button.attrs({type: "button"})`
	display: flex;
	align-items: center;
	justify-content: center;
	gap: ${({$gap}) => $gap || 4}px;
	min-width: ${({$w}) => $w}px;
	height: 24px;
	color: #a19f9d;
	font-size: 13px;

	em {
		font-family: "Liberation Serif", serif;
		font-size: 15px;
	}
	s {
		font-size: 12px;
	}
`

const ShadowLetter = styled.b`
	text-shadow: 1px 1px 1px #bbb;
`

const Combo = styled.select`
	appearance: none;
	width: ${({$w}) => $w}px;
	height: 23px;
	margin-right: 3px;
	border: 1px solid #c8c6c4;
	opacity: 1;
	background:
		linear-gradient(45deg, transparent 50%, #a19f9d 50%, #a19f9d 65%, transparent 65%) right 6px center / 4px 4px no-repeat,
		linear-gradient(-45deg, transparent 50%, #a19f9d 50%, #a19f9d 65%, transparent 65%) right 3px center / 4px 4px no-repeat,
		linear-gradient(#c8c6c4, #c8c6c4) right 12px top / 1px 100% no-repeat, #e1dfdd;
`

const Divider = styled.span`
	width: 1px;
	height: 21px;
	margin: 0 3px;
	background: #d2d0ce;
`

const Collapse = styled.button`
	align-self: flex-end;
	margin: 0 0 2px auto;
`

const Workspace = styled.main`
	display: flex;
	flex: 1;
	min-height: 0;
	border-bottom: 1px solid #c0c0c0;
	background: #e6e6e6;
`

const Panel = styled.aside`
	display: flex;
	flex: 0 0 208px;
	padding-right: 4px;
	border-right: 1px solid #bdbdbd;
`

const PanelList = styled.div`
	flex: 1;
	overflow: hidden;
`

const SectionHead = styled.button`
	display: flex;
	align-items: center;
	gap: 8px;
	height: 42px;
	padding: 6px 0 0 13px;
	color: #201f1e;
`

const ThumbRow = styled.div`
	display: flex;
	height: 96px;
	padding-left: 12px;
`

const ThumbNo = styled.span`
	width: 23px;
	font-size: 14px;
	line-height: 10px;
	color: ${({$active}) => ($active ? "#d24726" : "#444")};
`

const Thumb = styled.button`
	width: 133px;
	height: 76px;
	border: 1px solid ${({$active}) => ($active ? "#f0d9d3" : "#c6c6c6")};
	background: #fff;
	box-shadow: ${({$active}) => ($active ? "0 0 0 3px #b7472a" : "none")};
	overflow: hidden;
`

const ScrollTrack = styled.div`
	display: flex;
	flex-direction: column;
	flex: 1 1 auto;
	width: 15px;
	max-width: 15px;
	background: #f1f1f1;
`

const ScrollButton = styled.button`
	display: flex;
	align-items: center;
	justify-content: center;
	flex: 0 0 15px;
	width: 15px;
	border: 1px solid #8a8a8a;
	background: #fff;
`

const ScrollThumb = styled.div`
	flex-grow: 0;
	flex-shrink: 1;
	border: 1px solid #8a8a8a;
	background: #fff;
`

const ScrollSpace = styled.div`
	flex: 1;
`

const Stage = styled.div`
	flex: 1;
	min-width: 0;
	padding: 13px 83px 17px 84px;
	margin-bottom: 2px;
	border-bottom: 1px solid #c0c0c0;
`

const StageScroll = styled.div`
	display: flex;
	flex-direction: column;
	flex: 0 0 8px;
	min-width: 0;
	padding-bottom: 24px;
	overflow: hidden;
`

const PageJump = styled.div`
	display: flex;
	flex-direction: column;
	gap: 6px;
	padding: 4px 0 0 2px;
`

const SlideWrap = styled.article`
	height: 100%;
	padding: 0 14px 0 42px;
	border: 1px solid #c6c6c6;
	background: #fff;
	color: #404b60;
	font-family: Lato, sans-serif;
	overflow: hidden;

	h1 {
		margin: 0 -14px 0 -42px;
		padding-top: 35px;
		color: #000;
		font-size: 56px;
		font-weight: 300;
		line-height: 80px;
		text-align: center;
		white-space: nowrap;
		-webkit-text-stroke: 1px #000;
	}
`

const SlideColumns = styled.div`
	display: flex;
	justify-content: space-between;
	padding-top: 28px;
`

const Intro = styled.p`
	margin: 0;
	padding-top: 5px;
	font-size: 19px;
	line-height: 17px;
	white-space: nowrap;
`

const BudgetTable = styled.table`
	width: 437px;
	height: 225px;
	border: 3px solid #000;
	border-spacing: 0;
	background: #fff;
	box-shadow: 2px 2px 3px rgba(0, 0, 0, 0.5);
	color: #111;
	font-size: 15px;
	line-height: 18px;
	table-layout: fixed;

	th,
	td {
		height: 25px;
		padding: 0 0 0 3px;
		border-bottom: 1px solid #ececec;
		font-weight: 400;
		text-align: left;
	}
	th {
		height: 21px;
	}
	tr:last-child td {
		height: 23px;
	}
`

const Margin = styled.p`
	margin: 0;
	padding-top: 18px;
	font-size: 19px;
	line-height: 24px;
	white-space: nowrap;
`

const StatusWrap = styled.footer`
	display: flex;
	align-items: center;
	flex: 0 0 21px;
	padding-left: 12px;
	background: #f3f2f1;
	font-size: 11px;
`

const StatusText = styled.span`
	width: ${({$w}) => $w}px;
	white-space: nowrap;
`

const StatusButton = styled.button`
	display: flex;
	align-items: center;
	gap: 3px;
`

const StatusEnd = styled.div`
	display: flex;
	align-items: center;
	margin: 0 -4px 0 auto;
`

const NotesButton = styled.button`
	display: flex;
	align-items: center;
	gap: 2px;
	margin-right: 19px;
`

const ViewButton = styled.button`
	display: flex;
	align-items: center;
	justify-content: center;
	width: 40px;
	height: 21px;
	padding-bottom: 2px;
	background: ${({$active}) => ($active ? "#d2d0ce" : "transparent")};
`

const ZoomSign = styled.button`
	padding: 0 5px;
`

const ZoomValue = styled.span`
	width: 40px;
	padding-left: 6px;
`

const ZoomRange = styled.input`
	appearance: none;
	width: 100px;
	height: 10px;
	background: linear-gradient(#555, #555) center / 100% 1px no-repeat, linear-gradient(#555, #555) center / 1px 5px no-repeat;

	&::-webkit-slider-thumb {
		appearance: none;
		width: 5px;
		height: 10px;
		background: #3a3a38;
	}
`

const Watermark = styled.div`
	position: fixed;
	right: 0;
	bottom: 15px;
	left: 0;
	color: rgba(150, 150, 150, 0.3);
	font: 700 25px/24px "Noto Sans", sans-serif;
	text-align: center;
	pointer-events: none;

	span {
		display: block;
		font: 700 44px/42px "DejaVu Sans", sans-serif;
	}
`
